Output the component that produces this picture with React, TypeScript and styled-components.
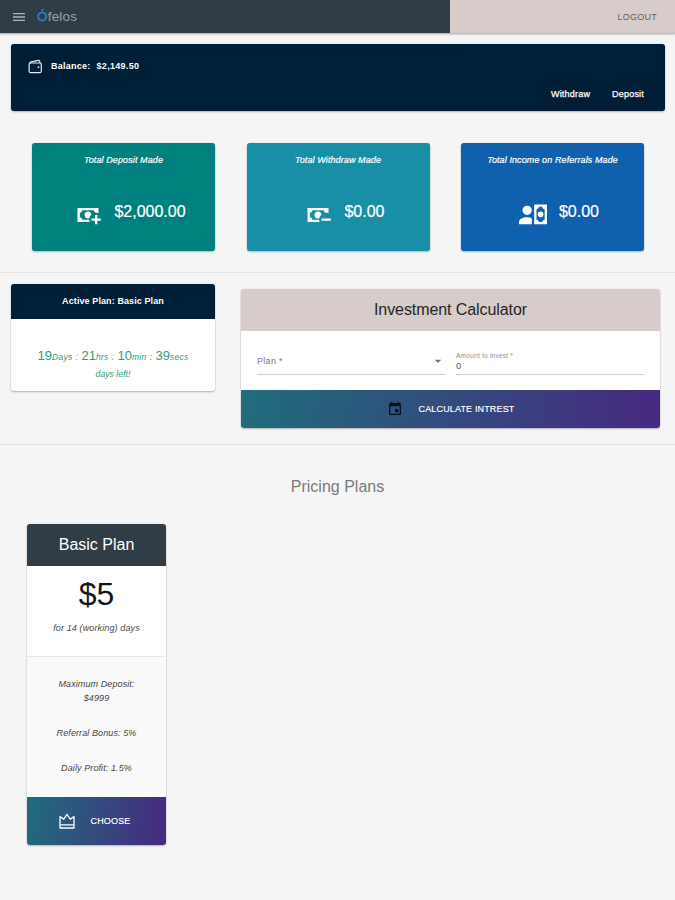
import React from 'react';
import styled, { createGlobalStyle } from 'styled-components';
import { MdArrowDropDown, MdEvent, MdMenu } from 'react-icons/md';

const GlobalStyle = createGlobalStyle`
  *, *::before, *::after { box-sizing: border-box; }
  body {
    margin: 0;
    background: #f5f5f5;
    color: #212121;
    font-family: "Liberation Sans", Arial, sans-serif;
  }
  h1, h2, h3, p { margin: 0; font-weight: 400; }
  button { border: 0; padding: 0; background: none; font: inherit; color: inherit; }
  svg { display: block; flex: none; }
`;

const cardShadow = '0 1px 2px rgba(0, 0, 0, 0.26), 0 0 1px rgba(0, 0, 0, 0.2)';
const gradient = 'linear-gradient(100deg, #1f6d7c 0%, #462b80 96%)';

const Page = styled.div`
  min-height: 900px;
  display: flex;
  flex-direction: column;
`;

const Header = styled.header`
  display: flex;
  height: 33px;
  box-shadow: 0 1px 2px rgba(0, 0, 0, 0.36);
`;

const Brand = styled.div`
  width: 450px;
  display: flex;
  align-items: center;
  gap: 10px;
  padding: 1px 0 0 11px;
  background: #303c46;
  color: #aeb3b7;
`;

const Logo = styled.span`
  font-size: 13.5px;
  line-height: 16px;
  letter-spacing: 0.2px;
  color: #9aa1a7;
`;

const LogoInitial = styled.span`
  color: #2583cf;
  -webkit-text-stroke: 0.4px currentColor;
`;

const HeaderActions = styled.div`
  flex: 1;
  display: flex;
  align-items: center;
  justify-content: flex-end;
  padding-right: 18px;
  background: #d7ccc9;
`;

const LogoutButton = styled.button`
  font-size: 9px;
  line-height: 12px;
  letter-spacing: 0.25px;
  color: #655e5d;
`;

const BalanceCard = styled.section`
  height: 67px;
  margin: 11px 10px 0 11px;
  padding: 15px 21px 0 17px;
  border-radius: 3px;
  background: #001e36;
  box-shadow: ${cardShadow};
  color: #fff;
`;

const BalanceLine = styled.div`
  display: flex;
  align-items: center;
  height: 14px;
  font-size: 9px;
  font-weight: 700;
`;

const BalanceLabel = styled.span`
  margin: 0 6px 1px 8px;
  letter-spacing: 0.25px;
`;

const BalanceValue = styled.span`
  margin-bottom: 1px;
  letter-spacing: 0.3px;
`;

const BalanceActions = styled.div`
  display: flex;
  justify-content: flex-end;
  gap: 22px;
  margin-top: 15px;
  font-size: 9px;
  line-height: 12px;
`;

const TextButton = styled.button`
  letter-spacing: 0.2px;
  -webkit-text-stroke: 0.25px currentColor;
`;

const Stats = styled.section`
  display: grid;
  grid-template-columns: repeat(3, 183px);
  column-gap: 31.5px;
  padding: 32px 0 21px 32px;
  border-bottom: 1px solid #e4e4e4;
`;

const StatCard = styled.article<{ $color: string }>`
  height: 108px;
  padding-top: 11px;
  border-radius: 3px;
  background: ${({ $color }) => $color};
  box-shadow: ${cardShadow};
  color: #fff;
  text-align: center;
`;

const StatTitle = styled.h2`
  font-size: 9px;
  line-height: 12px;
  font-style: italic;
  letter-spacing: 0.1px;
  -webkit-text-stroke: 0.2px currentColor;
`;

const StatBody = styled.div`
  display: flex;
  align-items: flex-start;
  justify-content: center;
  gap: 12px;
  margin-top: 35px;
  padding-left: 13px;
`;

const StatValue = styled.span`
  margin-top: 2px;
  font-size: 16px;
  line-height: 18px;
  -webkit-text-stroke: 0.2px currentColor;
`;

const Tools = styled.section`
  display: grid;
  grid-template-columns: 204px 419px;
  column-gap: 26px;
  align-items: start;
  height: 172px;
  padding: 11px 0 0 11px;
  border-bottom: 1px solid #dedede;
`;

const Panel = styled.article`
  overflow: hidden;
  border-radius: 3px;
  background: #fff;
  box-shadow: ${cardShadow};
`;

const ActivePanel = styled(Panel)`
  height: 107px;
`;

const ActiveTitle = styled.h2`
  height: 35px;
  background: #001e36;
  color: #fff;
  font-size: 9px;
  line-height: 35px;
  font-weight: 700;
  letter-spacing: 0.1px;
  text-align: center;
`;

const Countdown = styled.p`
  padding-top: 28px;
  color: #2c9c7b;
  text-align: center;
  font-size: 13px;
  line-height: 17px;
`;

const CountdownUnit = styled.em`
  font-size: 8.5px;
  letter-spacing: 0.25px;
  word-spacing: 0.6px;
`;

const CountdownCaption = styled.em`
  display: block;
  font-size: 8.7px;
`;

const CalculatorPanel = styled(Panel)`
  margin-top: 5px;
`;

const CalculatorTitle = styled.h2`
  height: 42px;
  background: #d7ccc9;
  color: #282424;
  font-size: 16px;
  line-height: 42px;
  letter-spacing: -0.08px;
  text-align: center;
`;

const Fields = styled.div`
  display: grid;
  grid-template-columns: 189px 188px;
  column-gap: 10px;
  height: 59px;
  padding: 16px 16px 0;
`;

const Field = styled.div`
  height: 28px;
  border-bottom: 1px solid #d2d2d2;
  color: #777;
`;

const SelectField = styled(Field)`
  display: flex;
  align-items: center;
  justify-content: space-between;
  padding-top: 1px;
  font-size: 9px;
  letter-spacing: 0.3px;
`;

const FieldLabel = styled.label`
  display: block;
  padding-top: 5px;
  color: #919191;
  font-size: 6.6px;
  line-height: 8px;
  letter-spacing: 0.2px;
`;

const FieldValue = styled.div`
  color: #606060;
  font-size: 9.5px;
  line-height: 11px;
`;

const GradientButton = styled.button<{ $height: number; $gap: number; $shift?: number }>`
  display: flex;
  align-items: center;
  justify-content: center;
  gap: ${({ $gap }) => $gap}px;
  width: 100%;
  height: ${({ $height }) => $height}px;
  padding-right: ${({ $shift = 0 }) => $shift}px;
  background: ${gradient};
  color: #fff;
  font-size: 9px;
  letter-spacing: 0.15px;
  -webkit-text-stroke: 0.15px currentColor;
`;

const PricingTitle = styled.h2`
  margin-top: 32px;
  color: #7a7a7a;
  font-size: 16px;
  line-height: 20px;
  text-align: center;
`;

const PlanCard = styled(Panel)`
  width: 139px;
  margin: 27px 0 0 27px;
`;

const PlanName = styled.h3`
  height: 42px;
  background: #303c46;
  color: #fff;
  font-size: 16px;
  line-height: 42px;
  text-align: center;
`;

const PlanPrice = styled.div`
  height: 90px;
  padding-top: 8px;
  color: #151515;
  font-size: 32px;
  line-height: 40px;
  text-align: center;
`;

const PlanPeriod = styled.p`
  margin-top: 8px;
  color: #484848;
  font-size: 9px;
  line-height: 12px;
  letter-spacing: 0.12px;
  font-style: italic;
`;

const PlanDetails = styled.div`
  display: flex;
  flex-direction: column;
  align-items: center;
  gap: 21px;
  height: 141px;
  padding-top: 20px;
  border-top: 1px solid #e8e8e8;
  background: #fafafa;
  color: #454545;
  font-size: 9px;
  line-height: 14px;
  letter-spacing: 0.1px;
  font-style: italic;
  text-align: center;
`;

const PlanDetail = styled.p`
  width: 90px;
`;

const CASH_PLUS =
  'M15 15V17H18V20H20V17H23V15H20V12H18V15M14.97 11.61C14.85 10.28 13.59 8.97 12 9C10.3 9.03 9 10.3 9 12C9 13.7 10.3 14.94 12 15C12.38 15 12.77 14.92 13.14 14.77C13.41 13.67 13.86 12.63 14.97 11.61M13 16H7C7 14.9 6.1 14 5 14V10C6.1 10 7 9.1 7 8H17C17 9.1 17.9 10 19 10V10.06C19.67 10.06 20.34 10.18 21 10.4V6H3V18H13.32C13.1 17.33 13 16.66 13 16Z';
const CASH_MINUS =
  'M15 15V17H23V15M14.97 11.61C14.85 10.28 13.59 8.97 12 9C10.3 9.03 9 10.3 9 12C9 13.7 10.3 14.94 12 15C12.38 15 12.77 14.92 13.14 14.77C13.41 13.67 13.86 12.63 14.97 11.61M13 16H7C7 14.9 6.1 14 5 14V10C6.1 10 7 9.1 7 8H17C17 9.1 17.9 10 19 10V10.06C19.67 10.06 20.34 10.18 21 10.4V6H3V18H13.32C13.1 17.33 13 16.66 13 16Z';
const ACCOUNT_CASH =
  'M11 8C11 10.21 9.21 12 7 12C4.79 12 3 10.21 3 8C3 5.79 4.79 4 7 4C9.21 4 11 5.79 11 8M11 14.72V20H0V18C0 15.79 3.13 14 7 14C8.5 14 9.87 14.27 11 14.72M24 20H13V3H24V20M16 11.5C16 10.12 17.12 9 18.5 9C19.88 9 21 10.12 21 11.5C21 12.88 19.88 14 18.5 14C17.12 14 16 12.88 16 11.5M22 7C20.9 7 20 6.11 20 5H17C17 6.11 16.11 7 15 7V16C16.11 16 17 16.9 17 18H20C20 16.9 20.9 16 22 16V7Z';

const stats = [
  { title: 'Total Deposit Made', value: '$2,000.00', color: '#00807f', icon: CASH_PLUS },
  { title: 'Total Withdraw Made', value: '$0.00', color: '#198fa7', icon: CASH_MINUS },
  { title: 'Total Income on Referrals Made', value: '$0.00', color: '#0f61ad', icon: ACCOUNT_CASH },
];

const countdown = [
  ['19', 'Days'],
  ['21', 'hrs'],
  ['10', 'min'],
  ['39', 'secs'],
];

function WalletIcon() {
  return (
    <svg width="15" height="15" viewBox="0 0 15 15" fill="none" stroke="#e8ebee" strokeWidth="1.2" strokeLinejoin="round">
      <rect x="1.1" y="4" width="12.2" height="9.6" rx="1.6" />
      <path d="M1.5 4.7Q1.8 3.2 3.2 2.9L10.3 1.4Q11.8 1.2 11.8 2.7V4" />
      <circle cx="10.5" cy="8.2" r="0.9" fill="#e8ebee" stroke="none" />
    </svg>
  );
}

function CrownIcon() {
  return (
    <svg width="18" height="18" viewBox="0 0 18 18" fill="none" stroke="currentColor" strokeWidth="1.3" strokeLinejoin="round">
      <path d="M2 16V4.6L5.8 7.2L9 2.4L12.2 7.2L16 4.6V16Z" />
      <path d="M2.4 12.9H15.6" strokeWidth="1.1" />
    </svg>
  );
}

export default function App() {
  return (
    <Page>
      <GlobalStyle />
      <Header>
        <Brand>
          <MdMenu size={16} />
          <Logo>
            <LogoInitial>Ó</LogoInitial>felos
          </Logo>
        </Brand>
        <HeaderActions>
          <LogoutButton>LOGOUT</LogoutButton>
        </HeaderActions>
      </Header>

      <BalanceCard>
        <BalanceLine>
          <WalletIcon />
          <BalanceLabel>Balance:</BalanceLabel>
          <BalanceValue>$2,149.50</BalanceValue>
        </BalanceLine>
        <BalanceActions>
          <TextButton>Withdraw</TextButton>
          <TextButton>Deposit</TextButton>
        </BalanceActions>
      </BalanceCard>

      <Stats>
        {stats.map((stat) => (
          <StatCard key={stat.title} $color={stat.color}>
            <StatTitle>{stat.title}</StatTitle>
            <StatBody>
              <svg width="28" height="28" viewBox="0 0 24 24" fill="currentColor">
                <path d={stat.icon} />
              </svg>
              <StatValue>{stat.value}</StatValue>
            </StatBody>
          </StatCard>
        ))}
      </Stats>

      <Tools>
        <ActivePanel>
          <ActiveTitle>Active Plan: Basic Plan</ActiveTitle>
          <Countdown>
            {countdown.map(([amount, unit], index) => (
              <React.Fragment key={unit}>
                {amount}
                <CountdownUnit>
                  {unit}
                  {index < countdown.length - 1 ? ' : ' : ''}
                </CountdownUnit>
              </React.Fragment>
            ))}
            <CountdownCaption>days left!</CountdownCaption>
          </Countdown>
        </ActivePanel>

        <CalculatorPanel>
          <CalculatorTitle>Investment Calculator</CalculatorTitle>
          <Fields>
            <SelectField>
              <span>Plan *</span>
              <MdArrowDropDown size={16} />
            </SelectField>
            <Field>
              <FieldLabel>Amount to invest *</FieldLabel>
              <FieldValue>0</FieldValue>
            </Field>
          </Fields>
          <GradientButton $height={38} $gap={16}>
            <MdEvent size={16} color="#08111c" />
            CALCULATE INTREST
          </GradientButton>
        </CalculatorPanel>
      </Tools>

      <PricingTitle>Pricing Plans</PricingTitle>
      <PlanCard>
        <PlanName>Basic Plan</PlanName>
        <PlanPrice>
          $5
          <PlanPeriod>for 14 (working) days</PlanPeriod>
        </PlanPrice>
        <PlanDetails>
          <PlanDetail>Maximum Deposit: $4999</PlanDetail>
          <PlanDetail>Referral Bonus: 5%</PlanDetail>
          <PlanDetail>Daily Profit: 1.5%</PlanDetail>
        </PlanDetails>
        <GradientButton $height={48} $gap={15} $shift={5}>
          <CrownIcon />
          CHOOSE
        </GradientButton>
      </PlanCard>
    </Page>
  );
}
